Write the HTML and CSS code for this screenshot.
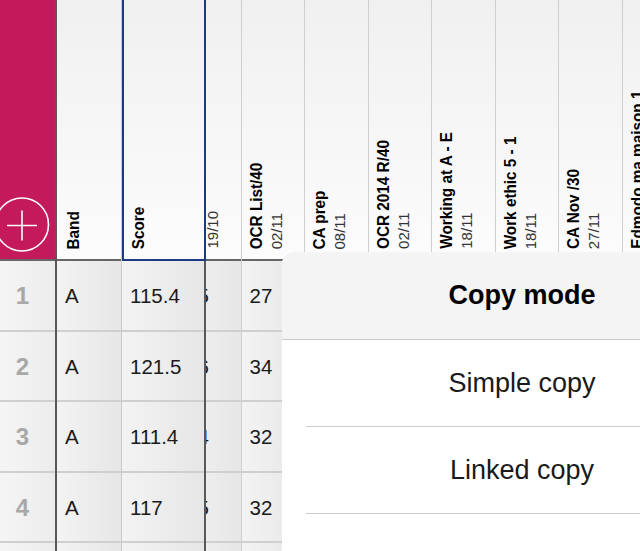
FILE: index.html
```html
<!DOCTYPE html>
<html>
<head>
<meta charset="utf-8">
<link rel="stylesheet" href="styles.css">
</head>
<body>
<div class="screen">
  <div class="sheet">
    <div class="row head">
      <div class="cell c0 add">
        <svg class="plus" width="55" height="64" viewBox="0 0 55 64">
          <circle cx="22" cy="29.5" r="26.5" fill="none" stroke="#fff" stroke-width="1.6"/>
          <path d="M7 30.5H37M22 15.5V45.5" stroke="#fff" stroke-width="1.6" fill="none"/>
        </svg>
      </div>
      <div class="cell band hc"><div class="vt"><b>Band</b></div></div>
      <div class="cell score hc sel"><div class="vt"><b>Score</b></div></div>
      <div class="port"><div class="track">
        <div class="cell sc hc"><div class="vt"><b>&nbsp;</b><span>19/10</span></div></div>
        <div class="cell sc hc"><div class="vt"><b>OCR List/40</b><span>02/11</span></div></div>
        <div class="cell sc hc"><div class="vt"><b>CA prep</b><span>08/11</span></div></div>
        <div class="cell sc hc"><div class="vt"><b>OCR 2014 R/40</b><span>02/11</span></div></div>
        <div class="cell sc hc"><div class="vt"><b>Working at A - E</b><span>18/11</span></div></div>
        <div class="cell sc hc"><div class="vt"><b>Work ethic 5 - 1</b><span>18/11</span></div></div>
        <div class="cell sc hc"><div class="vt"><b>CA Nov /30</b><span>27/11</span></div></div>
        <div class="cell sc hc"><div class="vt"><b>Edmodo ma maison 1</b></div></div>
      </div></div>
    </div>

    <div class="row">
      <div class="cell c0 num">1</div>
      <div class="cell band dc">A</div>
      <div class="cell score dc">115.4</div>
      <div class="port"><div class="track">
        <div class="cell sc dc">15</div><div class="cell sc dc">27</div><div class="cell sc dc"></div><div class="cell sc dc"></div>
        <div class="cell sc dc"></div><div class="cell sc dc"></div><div class="cell sc dc"></div><div class="cell sc dc"></div>
      </div></div>
    </div>
    <div class="row">
      <div class="cell c0 num">2</div>
      <div class="cell band dc">A</div>
      <div class="cell score dc">121.5</div>
      <div class="port"><div class="track">
        <div class="cell sc dc">16</div><div class="cell sc dc">34</div><div class="cell sc dc"></div><div class="cell sc dc"></div>
        <div class="cell sc dc"></div><div class="cell sc dc"></div><div class="cell sc dc"></div><div class="cell sc dc"></div>
      </div></div>
    </div>
    <div class="row">
      <div class="cell c0 num">3</div>
      <div class="cell band dc">A</div>
      <div class="cell score dc">111.4</div>
      <div class="port"><div class="track">
        <div class="cell sc dc">14</div><div class="cell sc dc">32</div><div class="cell sc dc"></div><div class="cell sc dc"></div>
        <div class="cell sc dc"></div><div class="cell sc dc"></div><div class="cell sc dc"></div><div class="cell sc dc"></div>
      </div></div>
    </div>
    <div class="row">
      <div class="cell c0 num">4</div>
      <div class="cell band dc">A</div>
      <div class="cell score dc">117</div>
      <div class="port"><div class="track">
        <div class="cell sc dc">15</div><div class="cell sc dc">32</div><div class="cell sc dc"></div><div class="cell sc dc"></div>
        <div class="cell sc dc"></div><div class="cell sc dc"></div><div class="cell sc dc"></div><div class="cell sc dc"></div>
      </div></div>
    </div>
    <div class="row">
      <div class="cell c0 num"></div>
      <div class="cell band dc"></div>
      <div class="cell score dc"></div>
      <div class="port"><div class="track">
        <div class="cell sc dc"></div><div class="cell sc dc"></div><div class="cell sc dc"></div><div class="cell sc dc"></div>
        <div class="cell sc dc"></div><div class="cell sc dc"></div><div class="cell sc dc"></div><div class="cell sc dc"></div>
      </div></div>
    </div>
  </div>

  <div class="popover">
    <div class="pop-title">Copy mode</div>
    <div class="pop-item">Simple copy</div>
    <div class="pop-item">Linked copy</div>
    <div class="pop-item"></div>
  </div>
</div>
</body>
</html>
```

FILE: styles.css
```css
* { box-sizing: border-box; }
html, body { margin: 0; padding: 0; }
body {
  font-family: "Liberation Sans", Arial, sans-serif;
  background: #fff;
  color: #1a1a1a;
}
.screen {
  position: relative;
  width: 640px;
  height: 551px;
  overflow: hidden;
}
.sheet { display: flex; flex-direction: column; }
.row { display: flex; height: 70.5px; flex: none; }
.row.head { height: 261px; }

.cell { flex: none; height: 100%; }
.c0 { width: 57px; border-right: 2px solid #585858; }
.band { width: 65px; border-right: 1px solid #cacaca; }
.score { width: 84px; border-right: 2px solid #585858; }
.port { flex: 1; min-width: 0; overflow: hidden; }
.track { display: flex; height: 100%; margin-left: -28px; }
.sc { width: 63.5px; border-right: 1px solid #cfcfcf; }

/* header */
.hc {
  display: flex;
  align-items: flex-end;
  padding: 0 0 12px 5px;
  background: linear-gradient(to bottom, #f0f0f0, #fcfcfc);
  box-shadow: inset 0 -2px 0 #666;
}
.band.hc { padding-left: 7px; }
.add {
  background: #c4195b;
  box-shadow: inset 0 -2px 0 #666;
  display: flex;
  align-items: flex-end;
  padding-bottom: 2px;
}
.plus { display: block; }
.sel {
  border-left: 2px solid #1b3c85;
  border-right: 2px solid #1b3c85;
  border-bottom: 2px solid #1b3c85;
  box-shadow: none;
  padding-left: 5px;
  padding-bottom: 10px;
}
.vt {
  writing-mode: vertical-rl;
  transform: rotate(180deg);
  white-space: nowrap;
  line-height: 20px;
}
.vt b {
  display: block;
  font-weight: 700;
  font-size: 17px;
  color: #000;
  transform: scaleY(0.9);
  transform-origin: center top;
}
.vt span {
  display: block;
  font-size: 15px;
  color: #333;
}

/* data */
.dc {
  display: flex;
  align-items: center;
  padding-left: 8px;
  font-size: 20.5px;
  color: #1a1a1a;
  background: linear-gradient(to right, #f3f3f3, #e6e6e6);
  box-shadow: inset 0 -2px 0 #cfcfcf;
}
.num {
  display: flex;
  align-items: center;
  justify-content: center;
  padding-right: 10px;
  font-size: 24px;
  font-weight: 700;
  color: #a8a8a8;
  background: linear-gradient(to right, #f5f5f5, #ececec);
  box-shadow: inset 0 -2px 0 #cfcfcf;
}

/* popover */
.popover {
  position: absolute;
  left: 282px;
  top: 252px;
  width: 480px;
  height: 320px;
  background: #fff;
  border-radius: 12px 12px 0 0;
  overflow: hidden;
}
.pop-title {
  height: 88px;
  display: flex;
  align-items: center;
  justify-content: center;
  background: #f4f4f4;
  border-bottom: 1px solid #c9c9c9;
  font-size: 27px;
  font-weight: 700;
  color: #000;
}
.pop-item {
  height: 87px;
  margin-left: 24px;
  padding-right: 24px;
  display: flex;
  align-items: center;
  justify-content: center;
  border-bottom: 1px solid #cdcdcd;
  font-size: 27px;
  color: #1a1a1a;
}
```
